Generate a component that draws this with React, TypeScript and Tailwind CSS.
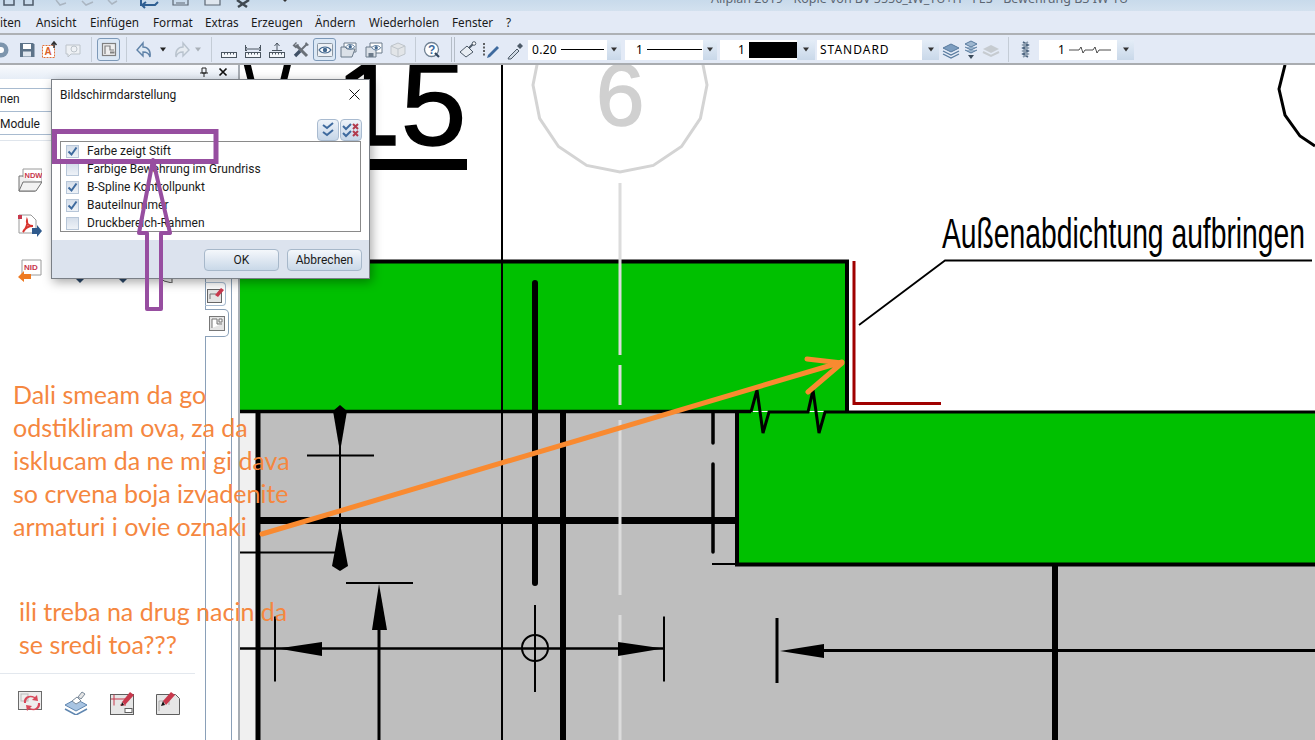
import React from 'react';
import clsx from 'clsx';

const Tri = ({ c = '#222' }: { c?: string }) => (
  <svg width="8" height="5" viewBox="0 0 8 5"><path d="M1 0.5h6L4 4.5z" fill={c} /></svg>
);

const Ruler = () => (
  <g fill="#f4f7fb" stroke="#4a5560" strokeWidth="1">
    <rect x="2.5" y="12.5" width="15" height="5" />
    <path d="M5.5 12.5v2M8.5 12.5v2M11.5 12.5v2M14.5 12.5v2" />
  </g>
);

const EyeGlyph = ({ x = 0, y = 0, s = 1 }: { x?: number; y?: number; s?: number }) => (
  <g transform={`translate(${x} ${y}) scale(${s})`}>
    <path d="M1 5c3-4 9-4 12 0-3 4-9 4-12 0z" fill="#fff" stroke="#456a90" strokeWidth="1.2" />
    <circle cx="7" cy="5" r="2.2" fill="#456a90" />
  </g>
);

const I = ({ children, w = 20 }: { children: React.ReactNode; w?: number }) => (
  <svg width={w} height="20" viewBox={`0 0 ${w} 20`}>{children}</svg>
);

const Tool = ({ w, className, children }: { w: string; className?: string; children?: React.ReactNode }) => (
  <div className={clsx('flex shrink-0 items-center justify-center', w, className)}>{children}</div>
);

const Sep = ({ className }: { className?: string }) => <div className={clsx('h-[25px] w-px shrink-0 bg-[#c4ccd6]', className)} />;

const Combo = ({ field, btn, className, children }: { field: string; btn: string; className?: string; children: React.ReactNode }) => (
  <div className={clsx('flex h-[20px] shrink-0', className)}>
    <div className={clsx('flex items-center overflow-hidden bg-white text-[12px] text-black', field)}>{children}</div>
    <div className={clsx('flex items-center justify-center bg-gradient-to-b from-[#e4edf7] to-[#c9d8e9]', btn)}>
      <Tri c="#333" />
    </div>
  </div>
);

const menu = [
  { t: 'iten', w: 'w-[36px]' },
  { t: 'Ansicht', w: 'w-[54px]' },
  { t: 'Einfügen', w: 'w-[63px]' },
  { t: 'Format', w: 'w-[52px]' },
  { t: 'Extras', w: 'w-[46px]' },
  { t: 'Erzeugen', w: 'w-[64px]' },
  { t: 'Ändern', w: 'w-[54px]' },
  { t: 'Wiederholen', w: 'w-[83px]' },
  { t: 'Fenster', w: 'w-[54px]' },
  { t: '?', w: 'w-[20px]' },
];

const TitleBar = () => (
  <div className="flex h-[11px] overflow-hidden bg-gradient-to-b from-[#c8daeb] to-[#d3e1ef]">
    {/* quick access icons, cut off by the top of the shot */}
    <svg width="300" height="11" viewBox="0 0 300 11" className="shrink-0">
      <g fill="none" stroke="#4d5a68" strokeWidth="1.5">
        <path d="M4 0v5h10V0M24 0v5h9V0" />
      </g>
      <g fill="none" stroke="#aab5c1" strokeWidth="1.5">
        <path d="M56 0l4 5 6-2M82 1l4 4 7-3M108 0l4 4 5-3" />
      </g>
      <path d="M141 0v5h14l3-3M146 2l-4 3 3 3" fill="none" stroke="#2f5f92" strokeWidth="2" />
      <path d="M173 0v5h15V0M176 3h9" fill="none" stroke="#5c6773" strokeWidth="1.2" />
      <path d="M205 0v5h15V0" fill="#dfe6ee" stroke="#5c6773" strokeWidth="1.2" />
      <path d="M237 0l10 7M249 0l-11 7" stroke="#3f4850" strokeWidth="2.5" />
      <path d="M283 0l2 2 2-2" fill="#333" />
    </svg>
    <div className="ml-[411px] -mt-[9px] whitespace-nowrap text-[12.5px] leading-[15px] text-[#5c6672]">
      Allplan 2019 - Kopie von BV 5556_IW_TU+H - FES - Bewehrung B3 IW-TU
    </div>
  </div>
);

const MenuBar = () => (
  <div className="flex h-[24px] items-center border-b-2 border-[#aeb1b5] bg-[#e3eaf6] pt-[2px] text-[11.7px] text-[#1a1a1a]">
    {menu.map((m) => (
      <span key={m.t} className={clsx('shrink-0', m.w)}>{m.t}</span>
    ))}
  </div>
);

const Toolbar = () => (
  <div className="flex h-[30px] items-center border-b-2 border-[#a9acb0] bg-[#e3eaf6] pt-px">
    <Tool w="w-[16px]" className="justify-start">
      <I w={12}><circle cx="1" cy="10" r="7.5" fill="#7d95ad" /><circle cx="1" cy="10" r="3" fill="#fff" /></I>
    </Tool>
    <Tool w="w-[22px]">
      <I w={18}><path d="M2 3h13l1.5 1.5V17H2z" fill="#5d7389" /><rect x="5" y="4" width="8" height="5" fill="#fff" /><rect x="5" y="11.5" width="8" height="5" fill="#dfe6ee" /></I>
    </Tool>
    <Tool w="w-[22px]">
      <I w={18}>
        <rect x="2.5" y="5.5" width="12" height="12" fill="#fff" stroke="#e0703a" strokeDasharray="2 1" />
        <text x="4.5" y="15" fontSize="10" fontWeight="bold" fill="#d9622b" fontFamily="Liberation Sans">A</text>
        <path d="M14 8V3M11.500 5l2.500-3 2.500 3" fill="none" stroke="#333" strokeWidth="1.5" />
      </I>
    </Tool>
    <Tool w="w-[26px]">
      <I><path d="M3 5h14v9H8l-3 3v-3H3z" fill="#eef1f5" stroke="#bcc3ca" /><circle cx="11" cy="9" r="3" fill="none" stroke="#bcc3ca" /></I>
    </Tool>
    <Sep className="ml-[5px]" />
    <Tool w="w-[23px]" className="ml-[5px] h-[23px] rounded-[3px] border border-[#7d99b8] bg-[#dce8f5]">
      <I w={18}><rect x="2.500" y="3.500" width="13" height="12" fill="#eee" stroke="#808080" strokeWidth="1.2" /><path d="M5 14V6h5v4h4" fill="none" stroke="#808080" strokeWidth="1.2" /><rect x="10" y="11.500" width="4.500" height="2" fill="#808080" /></I>
    </Tool>
    <Sep className="ml-[6px]" />
    <Tool w="w-[28px]" className="ml-[4px]">
      <I><path d="M8 3L2 10l6 6v-4c3 0 6 1 7 5 1-6-2-10-7-10z" fill="#dfe9f4" stroke="#5f82a8" strokeWidth="1.4" /></I>
    </Tool>
    <Tool w="w-[8px]"><Tri /></Tool>
    <Tool w="w-[26px]" className="ml-px">
      <I><path d="M12 3l6 7-6 6v-4c-3 0-6 1-7 5-1-6 2-10 7-10z" fill="#e6ebf1" stroke="#b9c3ce" strokeWidth="1.4" /></I>
    </Tool>
    <Tool w="w-[8px]"><Tri c="#a9b0b8" /></Tool>
    <Sep className="ml-[9px]" />
    <Tool w="w-[24px]" className="ml-[5px]"><I><Ruler /></I></Tool>
    <Tool w="w-[24px]">
      <I><Ruler /><path d="M2 9h16M4 7L2 9l2 2M16 7l2 2-2 2M2.500 5v6M17.500 5v6" fill="none" stroke="#4a5560" /></I>
    </Tool>
    <Tool w="w-[24px]">
      <I><Ruler /><path d="M10 3v7M7.500 6L10 3l2.500 3M5 10.500h10" fill="none" stroke="#4a5560" /></I>
    </Tool>
    <Tool w="w-[24px]">
      <I>
        <path d="M5 5l11 11" stroke="#6a7078" strokeWidth="3" />
        <path d="M1.500 5.500L5 2l1 1-2 2 1 1 2-2 1 1-3 3.500z" fill="#6a7078" />
        <path d="M16 4l-7 7" stroke="#6a7078" strokeWidth="2" />
        <path d="M9 11l-5 5" stroke="#3f5066" strokeWidth="3.400" />
        <path d="M15 2l3 3-2 1-2-2z" fill="#6a7078" />
      </I>
    </Tool>
    <Tool w="w-[23px]" className="h-[23px] rounded-[3px] border border-[#7d99b8] bg-[#dce8f5]">
      <I><rect x="2.500" y="3.500" width="15" height="13" rx="1" fill="#eef1f5" stroke="#8b96a2" /><EyeGlyph x={3} y={5} /></I>
    </Tool>
    <Tool w="w-[26px]">
      <I><path d="M5 3h12v9H5z" fill="#fff" stroke="#6b7a8a" /><path d="M2 7h4l2 2h8l-3 8H2z" fill="#dbe1e8" stroke="#6b7a8a" /><EyeGlyph x={6} y={3} s={0.75} /></I>
    </Tool>
    <Tool w="w-[24px]">
      <I><path d="M6 3h12v10H6z" fill="#fff" stroke="#6b7a8a" /><path d="M2 7h10v10H2z" fill="#dbe1e8" stroke="#6b7a8a" /><rect x="4.500" y="13" width="5" height="4" fill="#6b7a8a" /><EyeGlyph x={7} y={4} s={0.75} /></I>
    </Tool>
    <Tool w="w-[24px]">
      <I><path d="M10 3l7 3v8l-7 3-7-3V6z" fill="#e2e5e8" stroke="#bfc5cb" /><path d="M3 6l7 3 7-3M10 9v8" fill="none" stroke="#bfc5cb" /></I>
    </Tool>
    <Sep className="ml-[5px]" />
    <Tool w="w-[22px]" className="ml-[5px]">
      <I>
        <circle cx="9.500" cy="9.500" r="7" fill="#fff" stroke="#6f8193" strokeWidth="1.3" />
        <text x="6" y="14" fontSize="12" fontWeight="bold" fill="#3e6a9e" fontFamily="Liberation Sans">?</text>
        <path d="M13 13l4 4" stroke="#2f4660" strokeWidth="2.200" />
      </I>
    </Tool>
    <div className="ml-[8px] flex h-[25px] w-[4px] shrink-0 justify-between">
      <span className="w-px bg-[#b5bdc7]" />
      <span className="w-px bg-[#b5bdc7]" />
    </div>
    <Tool w="w-[22px]" className="ml-[2px]">
      <I><path d="M2 12l7-6 6 6-7 5z" fill="#e8edf3" stroke="#4d5a68" /><path d="M11 8l4-4" stroke="#4d5a68" strokeWidth="2" /><circle cx="16" cy="3.500" r="1.800" fill="#fff" stroke="#4d5a68" /></I>
    </Tool>
    <Tool w="w-[24px]">
      <I><path d="M7 15l9-9 2 2-9 9-3 1z" fill="#3e6a9e" /><path d="M3 3v14" stroke="#333" strokeDasharray="2 1.500" strokeWidth="1.500" /></I>
    </Tool>
    <Tool w="w-[24px]">
      <I><path d="M4 17l8-8 2 2-8 8-3 0z" fill="#cfd9e4" stroke="#4d5a68" /><path d="M12 6l3-3 3 3-3 3z" fill="#4d5a68" /></I>
    </Tool>
    <Combo field="w-[79px]" btn="w-[14px]" className="ml-px">
      <span className="ml-[4px] shrink-0 tracking-[0.3px]">0.20</span>
      <span className="ml-[4px] h-px w-[43px] shrink-0 bg-black" />
    </Combo>
    <Combo field="w-[78px]" btn="w-[14px]" className="ml-[4px]">
      <span className="ml-[11px] shrink-0">1</span>
      <span className="ml-[4px] h-px w-[55px] shrink-0 bg-black" />
    </Combo>
    <Combo field="w-[77px]" btn="w-[18px]" className="ml-[3px]">
      <span className="ml-[18px] shrink-0">1</span>
      <span className="ml-[4px] h-[16px] w-[49px] shrink-0 bg-black" />
    </Combo>
    <Combo field="w-[105px]" btn="w-[17px]" className="ml-[2px]">
      <span className="ml-[3px] tracking-[1px]">STANDARD</span>
    </Combo>
    <Tool w="w-[20px]" className="ml-[2px]">
      <I><path d="M10 4l8 4-8 4-8-4z" fill="#7c9dc0" stroke="#587a9e" /><path d="M2 11l8 4 8-4M2 14l8 4 8-4" fill="none" stroke="#587a9e" strokeWidth="1.300" /></I>
    </Tool>
    <Tool w="w-[20px]">
      <I><path d="M10 1l6 3-6 3-6-3zM4 7l6 3 6-3M4 10l6 3 6-3" fill="#9db6cf" stroke="#587a9e" /><path d="M7 15h6l-3 4z" fill="#3b4b5c" /></I>
    </Tool>
    <Tool w="w-[20px]">
      <I><path d="M10 5l8 4-8 4-8-4z" fill="#c6cbd0" /><path d="M2 12l8 4 8-4" fill="none" stroke="#c6cbd0" strokeWidth="2" /></I>
    </Tool>
    <Sep className="ml-[7px]" />
    <Tool w="w-[20px]" className="ml-[7px]">
      <I><path d="M7 2l5 3-5 3 5 3-5 3 5 3" fill="none" stroke="#4d6580" strokeWidth="1.800" /><path d="M12 2L7 5l5 3-5 3 5 3-5 3" fill="none" stroke="#8a9bad" strokeWidth="1.800" /></I>
    </Tool>
    <Combo field="w-[78px]" btn="w-[17px]" className="ml-[3px]">
      <span className="ml-[19px] shrink-0">1</span>
      <svg width="44" height="10" viewBox="0 0 44 10" className="ml-[4px] shrink-0">
        <path d="M0 5h10l2-3 2 6 2-3h8l2-3 2 6 2-3h12" fill="none" stroke="#222" strokeWidth="0.800" />
      </svg>
    </Combo>
  </div>
);

const NdwIcon = () => (
  <svg width="24" height="24" viewBox="0 0 24 24">
    <path d="M5 1h19v13H5z" fill="#fff" stroke="#9a9a9a" />
    <path d="M1 8h4M1 8v15h16l6-9" fill="#eee" stroke="#707070" />
    <path d="M1 23l4-9h19l-6 9z" fill="#f2f2f2" stroke="#707070" />
    <text x="6.500" y="10" fontSize="7.500" fontWeight="bold" fill="#c8384c" fontFamily="Liberation Sans">NDW</text>
  </svg>
);
const PdfIcon = () => (
  <svg width="24" height="24" viewBox="0 0 24 24">
    <path d="M1 1h12l5 5v13H1z" fill="#fff" stroke="#9a9a9a" />
    <rect x="0" y="1" width="4" height="4" fill="#c8384c" />
    <path d="M5 18c3-3 5-9 4-12-1 4 2 6 6 6-4 0-8 2-10 6z" fill="none" stroke="#d8342f" strokeWidth="1.800" />
    <path d="M14 14h5v-3l5 6-5 6v-3h-5z" fill="#2f5a8c" />
  </svg>
);
const NidIcon = () => (
  <svg width="24" height="24" viewBox="0 0 24 24">
    <path d="M4 1h19v15H4z" fill="#fff" stroke="#9a9a9a" />
    <text x="6" y="11" fontSize="8" fontWeight="bold" fill="#c8384c" fontFamily="Liberation Sans">NID</text>
    <path d="M13 15H6v-3l-6 6 6 5v-3h7z" fill="#ee7a22" />
  </svg>
);

const bottomIcons = [
  <svg key="a" width="24" height="24" viewBox="0 0 24 24">
    <rect x="0.500" y="0.500" width="23" height="18" fill="#eee" stroke="#6b6b6b" />
    <rect x="3" y="3" width="7" height="7" fill="none" stroke="#bbb" />
    <path d="M8 12c0-5 4-7 8-5l-2 2 6 1-1-6-2 2c-6-3-12 0-11 6zM20 12c0 5-4 7-8 5l2-2-6-1 1 6 2-2c6 3 12 0 11-6z" fill="#d8485a" />
  </svg>,
  <svg key="b" width="24" height="24" viewBox="0 0 24 24">
    <path d="M12 8l11 6-11 6-11-6z" fill="#a8c4e2" stroke="#5f86b0" />
    <path d="M1 18l11 6 11-6" fill="none" stroke="#5f86b0" strokeWidth="1.500" />
    <path d="M8 10l5-4 4 4-5 3z" fill="#fff" stroke="#7a8a9a" />
    <path d="M14 6l4-5 3 2-4 5z" fill="#e5e5e5" stroke="#7a8a9a" />
  </svg>,
  <svg key="c" width="24" height="24" viewBox="0 0 24 24">
    <rect x="0.500" y="3.500" width="23" height="20" fill="#e6e6e6" stroke="#5e5e5e" />
    <path d="M4 3.500v11M1 8h17M10 14h6" fill="none" stroke="#c8384c" />
    <rect x="15" y="17.500" width="7" height="4" fill="#fff" stroke="#5e5e5e" />
    <path d="M12 11l8-10 4 3-9 10z" fill="#c8384c" />
    <path d="M12 11l-1 4 3-1z" fill="#111" />
  </svg>,
  <svg key="d" width="24" height="24" viewBox="0 0 24 24">
    <path d="M0.500 3.500h19l4 4v16H0.500z" fill="#e6e6e6" stroke="#5e5e5e" />
    <path d="M3 20V10h10v4" fill="none" stroke="#aaa" />
    <path d="M7 10l8-9 4 3-9 10z" fill="#c8384c" />
    <path d="M7 10l-2 5 4-1z" fill="#111" />
  </svg>,
];

const Sidebar = () => (
  <div className="flex w-[238px] shrink-0 flex-col bg-white font-['Roboto',sans-serif] text-[12px] text-[#1a1a1a]">
    <div className="flex h-[14px] shrink-0 items-center justify-end bg-gradient-to-b from-[#f8fafd] to-[#e6edf6] pr-[10px]">
      <svg width="10" height="10" viewBox="0 0 10 10" className="mr-[9px]">
        <path d="M3 1h4v5H3zM1 6h8M5 6v4" fill="none" stroke="#222" />
      </svg>
      <svg width="10" height="10" viewBox="0 0 10 10">
        <path d="M1.500 1.500l7 7M8.500 1.500l-7 7" stroke="#111" strokeWidth="1.700" />
      </svg>
    </div>
    <div className="mt-[9px] flex h-[24px] shrink-0 items-center border-y border-[#a8bbd0] pb-[3px]">nen</div>
    <div className="flex h-[23px] shrink-0 items-center border-b border-[#a8bbd0] pt-[2px]">Module</div>
    <div className="mt-[5px] h-[10px] shrink-0 border-t border-[#dfe5ec]" />
    <div className="flex min-h-0 flex-1">
      <div className="flex w-[206px] shrink-0 flex-col border-r border-[#8aa0b8] pl-[18px]">
        <div className="mt-[18px]"><NdwIcon /></div>
        <div className="mt-[22px]"><PdfIcon /></div>
        <div className="mt-[21px] flex gap-[22px]">
          <NidIcon />
          {/* these three are nearly all hidden by the dialog */}
          <svg width="24" height="24" viewBox="0 0 24 24"><path d="M12 20h8l-4 4z" fill="#2d4a6b" /></svg>
          <svg width="24" height="24" viewBox="0 0 24 24"><path d="M9 20h8l-4 4z" fill="#2d4a6b" /></svg>
          <svg width="24" height="24" viewBox="0 0 24 24"><path d="M4 18h12v6l-8-2z" fill="#f2f2f2" stroke="#555" /></svg>
        </div>
        <div className="mt-auto mb-[25px] -ml-[18px] w-[195px] border-t border-[#e3e8ee] pt-[17px] pl-[18px]">
          <div className="flex gap-[22px]">{bottomIcons}</div>
        </div>
      </div>
      <div className="flex w-[26px] shrink-0 flex-col border-r border-[#8aa0b8] pt-[132px]">
        <div className="-ml-px flex h-[24px] w-[21px] items-center justify-center rounded-r-[4px] border border-l-0 border-[#a8bbd0]">
          <svg width="17" height="17" viewBox="0 0 17 17">
            <rect x="0.500" y="3.500" width="14" height="13" fill="#e4e4e4" stroke="#666" />
            <path d="M3 13V8h6" fill="none" stroke="#777" />
            <path d="M8 9l6-7 3 2-6 7z" fill="#c8384c" />
          </svg>
        </div>
        <div className="-ml-px mt-[3px] flex h-[28px] w-[24px] items-center justify-center rounded-r-[5px] border border-l-0 border-[#8aa0b8] bg-white">
          <svg width="16" height="15" viewBox="0 0 16 15">
            <rect x="0.500" y="0.500" width="15" height="14" fill="#e4e4e4" stroke="#777" />
            <path d="M3 12V3h5v5h5M10 3h3v3h-3z" fill="#fff" stroke="#777" />
          </svg>
        </div>
      </div>
    </div>
  </div>
);

// 16 sided axis bubble, same way the CAD program tessellates its circles
const bubble = Array.from({ length: 16 }, (_, i) => {
  const a = (i * Math.PI) / 8;
  return `${(620 + 87 * Math.cos(a)).toFixed(1)},${(85 + 87 * Math.sin(a)).toFixed(1)}`;
}).join(' ');

const Drawing = () => (
  <svg viewBox="238 65 1077 675" className="block h-full w-full" fontFamily="Liberation Sans">
    <rect x="238" y="65" width="1077" height="675" fill="#fff" />
    <rect x="240" y="412" width="18" height="328" fill="#f0f0f0" />
    <rect x="258" y="412" width="1057" height="328" fill="#bebebe" />

    {/* green parts */}
    <rect x="240" y="261" width="607" height="150" fill="#00c000" />
    <rect x="736" y="412" width="579" height="152" fill="#00c000" />

    {/* title */}
    <text transform="translate(243 145) scale(0.62 1)" fontSize="118" fill="#000">V</text>
    <text x="335" y="145" fontSize="118" fill="#000" stroke="#000" strokeWidth="1.500">15</text>
    <rect x="300" y="159" width="167" height="11" fill="#000" />

    {/* axis */}
    <polygon points={bubble} fill="none" stroke="#d4d4d4" strokeWidth="3" />
    <text x="596" y="125" fontSize="87" fill="#d0d0d0" stroke="#d0d0d0" strokeWidth="1.500">6</text>

    {/* outlines */}
    <path d="M502 65V740" stroke="#000" strokeWidth="2" />
    <path d="M239 261.500H847V412" fill="none" stroke="#000" strokeWidth="4" />
    <path d="M240 411.500H743L751 411.500" stroke="#000" strokeWidth="3.500" />
    <path d="M751 412L757 390L763 433L769 412H808L813 390L819 433L825 412H1315" fill="none" stroke="#000" strokeWidth="3" />
    <path d="M737 412V564.500H1315" fill="none" stroke="#000" strokeWidth="4" />
    <path d="M258 412V740" stroke="#000" strokeWidth="5" />
    <path d="M260 520.500H735" stroke="#000" strokeWidth="7" />
    <path d="M535 283V583" stroke="#000" strokeWidth="6" strokeLinecap="round" />
    <path d="M563 412V740" stroke="#000" strokeWidth="6" />
    <path d="M713 412V443M713 464V552" stroke="#000" strokeWidth="3.500" strokeLinecap="round" />
    <path d="M712 564H735" stroke="#000" strokeWidth="2" />
    <path d="M1055 566V740" stroke="#000" strokeWidth="6" />

    {/* dashed grey axis line */}
    <path d="M620 183V355M620 365V405M620 420V595M620 615V740" stroke="#dcdcdc" strokeWidth="3" />

    {/* dimension lines */}
    <path d="M340 407V530M307 455.500H374M240 552.500H335" stroke="#000" strokeWidth="2" />
    <path d="M340 405L347 411L340 452L333 411z" fill="#000" />
    <path d="M340 523L348 566L340 571L332 566z" fill="#000" />
    <path d="M346 583H413" stroke="#000" strokeWidth="2" />
    <path d="M379 630V740" stroke="#000" strokeWidth="3" />
    <path d="M379 584L387 630H372z" fill="#000" />
    <path d="M240 648.500H664" stroke="#000" strokeWidth="2.500" />
    <path d="M275 616.500V681.500M664 616.500V681.500" stroke="#000" strokeWidth="2" />
    <path d="M278 648.500L322 642V656z" fill="#000" />
    <path d="M663 648.500L618 642V656z" fill="#000" />
    <circle cx="535" cy="648" r="13" fill="none" stroke="#000" strokeWidth="2" />
    <path d="M535 605V692" stroke="#000" strokeWidth="2" />
    <path d="M777 618V683" stroke="#000" strokeWidth="3" />
    <path d="M780 651L824 644V658z" fill="#000" />
    <path d="M824 650.500H1315" stroke="#000" strokeWidth="3" />

    {/* note with leader */}
    <path d="M854 261V403.500H941" fill="none" stroke="#a00000" strokeWidth="3" />
    <path d="M859 325L945 260.500H1312" fill="none" stroke="#000" strokeWidth="1.800" />
    <text x="942" y="248" fontSize="43" textLength="363" lengthAdjust="spacingAndGlyphs" fill="#000">Außenabdichtung aufbringen</text>

    {/* next axis bubble on the right */}
    <path d="M1285 65L1279 89L1285 115L1300 136L1315 146" fill="none" stroke="#000" strokeWidth="3" />

    {/* canvas edge */}
    <rect x="238" y="65" width="2" height="675" fill="#a7adb4" />
  </svg>
);

const rows = [
  { t: 'Farbe zeigt Stift', on: true },
  { t: 'Farbige Bewehrung im Grundriss', on: false },
  { t: 'B-Spline Kontrollpunkt', on: true },
  { t: 'Bauteilnummer', on: true },
  { t: 'Druckbereich-Rahmen', on: false },
];

const Dialog = () => (
  <div className="absolute left-[51px] top-[79px] flex h-[200px] w-[319px] flex-col border border-[#7a7f86] bg-white font-['Roboto',sans-serif] text-[12px] text-[#1a1a1a] shadow-[2px_3px_10px_rgba(0,0,0,0.35)]">
    <div className="flex h-[31px] shrink-0 items-center justify-between pb-[2px] pl-[8px] pr-[9px]">
      <span>Bildschirmdarstellung</span>
      <svg width="11" height="11" viewBox="0 0 11 11">
        <path d="M0.500 0.500l10 10M10.500 0.500l-10 10" stroke="#111" strokeWidth="1" />
      </svg>
    </div>
    <div className="mr-[7px] mt-[8px] flex h-[22px] shrink-0 justify-end">
      <div className="flex h-[22px] w-[22px] items-center justify-center rounded-[4px] border border-[#a9bbd0] bg-gradient-to-b from-[#eef3f9] to-[#c6d6e8]">
        <svg width="14" height="16" viewBox="0 0 14 16">
          <path d="M2 3l4 3 6-5M2 10l4 3 6-5" fill="none" stroke="#3e6a9e" strokeWidth="2" />
        </svg>
      </div>
      <div className="ml-px flex h-[22px] w-[22px] items-center justify-center rounded-[4px] border border-[#a9bbd0] bg-gradient-to-b from-[#eef3f9] to-[#c6d6e8]">
        <svg width="18" height="16" viewBox="0 0 18 16">
          <path d="M1 4l3 3 5-5M1 11l3 3 5-5" fill="none" stroke="#3e6a9e" strokeWidth="2" />
          <path d="M11 2l5 5M16 2l-5 5M11 9l5 5M16 9l-5 5" stroke="#b23a4c" strokeWidth="2" />
        </svg>
      </div>
    </div>
    <div className="mx-[8px] h-[91px] shrink-0 border border-[#8a8a8a] bg-white">
      {rows.map((r) => (
        <div key={r.t} className="flex h-[18px] items-center pl-[5px]">
          <div className="flex h-[13px] w-[13px] shrink-0 items-center justify-center border border-[#b7c6d8] bg-gradient-to-b from-[#d5deea] to-[#eef2f7]">
            {r.on && (
              <svg width="11" height="11" viewBox="0 0 11 11">
                <path d="M1.500 5.500l3 3 5-7" fill="none" stroke="#3e6a9e" strokeWidth="2" />
              </svg>
            )}
          </div>
          <span className="ml-[8px] whitespace-nowrap">{r.t}</span>
        </div>
      ))}
    </div>
    <div className="mt-[8px] flex flex-1 items-center justify-end gap-[8px] bg-[#dce3ee] pr-[7px] pt-px">
      <button className="h-[22px] w-[75px] rounded-[4px] border border-[#a7b8ca] bg-gradient-to-b from-[#f4f7fb] to-[#c9d8e8]">OK</button>
      <button className="h-[22px] w-[75px] rounded-[4px] border border-[#a7b8ca] bg-gradient-to-b from-[#f4f7fb] to-[#c9d8e8]">Abbrechen</button>
    </div>
  </div>
);

// purple box + arrow and the orange arrow someone drew on top of the shot
const Markup = () => (
  <svg viewBox="0 0 1315 740" className="pointer-events-none absolute left-0 top-0 h-[740px] w-[1315px]">
    <rect x="54.500" y="131.500" width="161.500" height="30" fill="none" stroke="#974ea0" strokeWidth="5" />
    <path d="M153 160L170 233H161V309H147V233H139z" fill="none" stroke="#974ea0" strokeWidth="4" strokeLinejoin="round" />
    <path d="M262 534L842 362M807 359L842 363L808 392" fill="none" stroke="#f98a30" strokeWidth="5" strokeLinecap="round" strokeLinejoin="round" />
  </svg>
);

const Notes = () => (
  <div className="pointer-events-none absolute left-[13px] top-[378px] font-['Lato',sans-serif] text-[25px] leading-[33px] text-[#f5873f]">
    <p>Dali smeam da go</p>
    <p>odstikliram ova, za da</p>
    <p>isklucam da ne mi gi dava</p>
    <p>so crvena boja izvadenite</p>
    <p>armaturi i ovie oznaki</p>
    <p className="ml-[6px] mt-[52px]">ili treba na drug nacin da</p>
    <p className="ml-[6px]">se sredi toa???</p>
  </div>
);

export default function App() {
  return (
    <div className="relative flex h-[740px] w-[1315px] flex-col overflow-hidden bg-white font-['Noto_Sans',sans-serif]">
      <TitleBar />
      <MenuBar />
      <Toolbar />
      <div className="flex min-h-0 flex-1">
        <Sidebar />
        <div className="relative min-w-0 flex-1">
          <Drawing />
        </div>
      </div>
      <Dialog />
      <Notes />
      <Markup />
    </div>
  );
}
